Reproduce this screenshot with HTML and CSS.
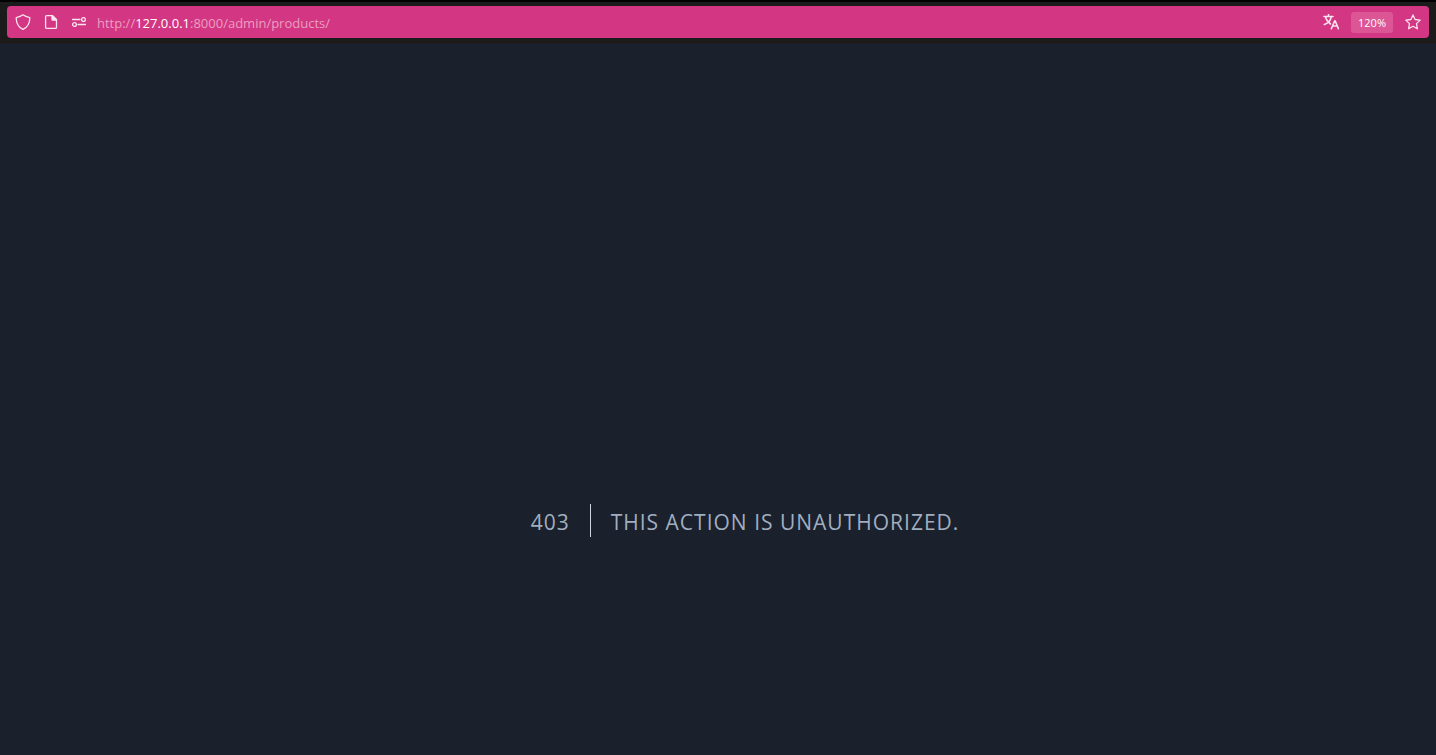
FILE: index.html
```html
<!DOCTYPE html>
<html lang="en">
<head>
  <meta charset="utf-8">
  <title>403</title>
  <link rel="stylesheet" href="styles.css">
</head>
<body class="page">
  <header class="toolbar">
    <div class="urlbar">
      <button class="icon-button" type="button" aria-label="Tracking protection">
        <svg class="icon" viewBox="0 0 16 16"><path d="M8 .8C6.200 2.200 4 3 1.700 3.300c-.3 0-.5.3-.5.600C1.300 9 3.500 13.300 8 15.300c4.500-2 6.700-6.300 6.800-11.400 0-.3-.2-.6-.5-.6C12 3 9.800 2.200 8 .8z"/></svg>
      </button>
      <button class="icon-button" type="button" aria-label="Page information">
        <svg class="icon" viewBox="0 0 16 16"><path d="M3.600 1.600h6l3.900 3.900v7.900a1 1 0 0 1-1 1H3.600a1 1 0 0 1-1-1V2.600a1 1 0 0 1 1-1z"/><path class="solid" d="M9 1.500v4a.7.7 0 0 0 .7.700h3.800z"/></svg>
      </button>
      <button class="icon-button" type="button" aria-label="Permissions">
        <svg class="icon" viewBox="0 0 16 16"><path d="M1.500 5.500h7.500M7 10.500h7.500"/><circle cx="12.500" cy="5.500" r="1.900"/><circle cx="3.500" cy="10.500" r="1.900"/></svg>
      </button>
      <a class="address" href="#">http://<span class="host">127.0.0.1</span>:8000/admin/products/</a>
      <div class="actions">
        <button class="icon-button" type="button" aria-label="Translate">
          <svg class="icon bold" viewBox="0 0 16 16"><path d="M1 2.500h9M5.500 .7v1.800M2.500 2.900C3.200 6 5.200 8.500 7.500 10M8.300 2.900C7.500 6.500 5 9.500 1.300 10.600M8.400 14.700l3.300-8h.4l3.300 8M9.500 12h4.800"/></svg>
        </button>
        <button class="zoom" type="button">120%</button>
        <button class="icon-button" type="button" aria-label="Bookmark">
          <svg class="icon" viewBox="0 0 16 16"><path d="M8 .9l2.100 4.600 5.100.6-3.700 3.500.9 5.200L8 12.300l-4.400 2.500.9-5.200L.8 6.100l5.100-.6z"/></svg>
        </button>
      </div>
    </div>
  </header>
  <main class="content">
    <div class="error">
      <h1 class="code">403</h1>
      <p class="message">This action is unauthorized.</p>
    </div>
  </main>
</body>
</html>
```
FILE: styles.css
```css
* {
  box-sizing: border-box;
}

.page {
  margin: 0;
  min-height: 100vh;
  display: flex;
  flex-direction: column;
  background: #1a202c;
  font-family: "Open Sans", "Noto Sans", sans-serif;
}

.toolbar {
  padding: 4px 7px;
  background: #1c1b1b;
  border-top: 2px solid #000;
  border-bottom: 1px solid #22180f;
}

.urlbar {
  display: flex;
  align-items: center;
  height: 32px;
  padding: 0 8px;
  border-radius: 4px;
  background: #d33682;
}

.icon-button {
  display: flex;
  margin: 0 12px 0 0;
  padding: 0;
  border: 0;
  background: none;
  color: #fbe4ef;
}

.icon {
  width: 16px;
  height: 16px;
  fill: none;
  stroke: currentColor;
  stroke-width: 1.300;
  stroke-linecap: round;
  stroke-linejoin: round;
}

.bold {
  stroke-width: 1.600;
}

.solid {
  fill: currentColor;
}

.address {
  margin-left: -2px;
  padding-top: 2px;
  color: #eb9fc3;
  font-size: 13px;
  line-height: 20px;
  text-decoration: none;
}

.host {
  color: #fff;
}

.actions {
  display: flex;
  align-items: center;
  gap: 12px;
  margin-left: auto;
}

.actions .icon-button {
  margin: 0;
}

.zoom {
  padding: 0 7px;
  border: 0;
  border-radius: 3px;
  background: #dc5595;
  color: #fff;
  font-family: inherit;
  font-size: 11px;
  line-height: 21px;
}

.content {
  flex: 1;
  display: flex;
  align-items: center;
  justify-content: center;
  padding: 242px 0 0 54px;
}

.error {
  display: flex;
  align-items: center;
  color: #a0aec0;
  text-transform: uppercase;
}

.code,
.message {
  margin: 0;
  padding: 3px 20px 0;
  font-size: 21px;
  font-weight: 400;
  line-height: 30px;
  letter-spacing: 1px;
}

.code {
  border-right: 1px solid #cbd5e0;
}
```
